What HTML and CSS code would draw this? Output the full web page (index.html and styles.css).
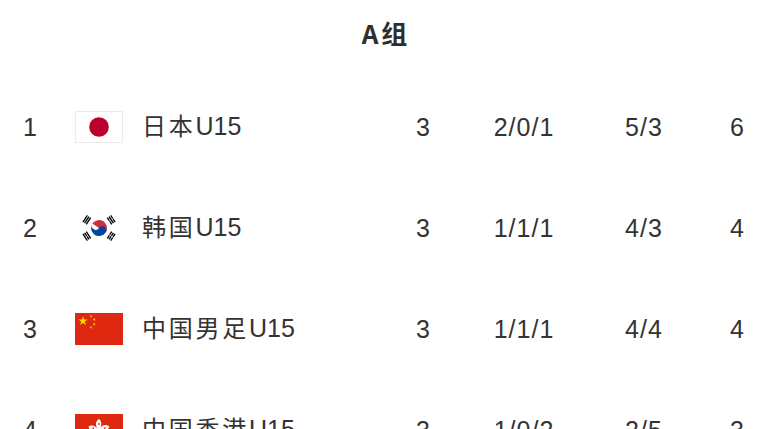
FILE: index.html
```html
<!DOCTYPE html>
<html lang="zh-CN">
<head>
<meta charset="utf-8">
<title>A组</title>
<link rel="stylesheet" href="styles.css">
</head>
<body>
<div class="page">
  <div class="title">A组</div>
  <div class="table">
    <div class="row">
      <div class="rank">1</div>
      <div class="flag-cell">
        <svg class="flag flag-jp" viewBox="0 0 48 32" width="48" height="32">
          <rect x="0.5" y="0.5" width="47" height="31" fill="#fff" stroke="#ebebeb"/>
          <circle cx="24" cy="16" r="9.8" fill="#bc002d"/>
        </svg>
      </div>
      <div class="name"><span class="cn">日本</span>U15</div>
      <div class="stat">3</div>
      <div class="stat">2/0/1</div>
      <div class="stat">5/3</div>
      <div class="stat">6</div>
    </div>
    <div class="row">
      <div class="rank">2</div>
      <div class="flag-cell">
        <svg class="flag" viewBox="-36 -24 72 48" width="48" height="32">
          <rect x="-36" y="-24" width="72" height="48" fill="#fff"/>
          <g transform="rotate(-56.3099325)">
            <g id="kr-b2">
              <path id="kr-b" d="M-6-26H6v2H-6zm0 3H6v2H-6zm0 3H6v2H-6z" fill="#000"/>
              <use href="#kr-b" y="44"/>
            </g>
            <path stroke="#fff" d="M0,17v10"/>
            <path fill="#cd2e3a" d="M0-12A12 12 0 0 1 0 12z"/>
            <path fill="#0047a0" d="M0-12A12 12 0 0 0 0 12 6 6 0 0 0 0 0 6 6 0 0 1 0-12z"/>
          </g>
          <g transform="rotate(-123.6900675)">
            <use href="#kr-b2"/>
            <path stroke="#fff" d="M0-23.5v3M0,17v3.5M0,23.5v3"/>
          </g>
        </svg>
      </div>
      <div class="name"><span class="cn">韩国</span>U15</div>
      <div class="stat">3</div>
      <div class="stat">1/1/1</div>
      <div class="stat">4/3</div>
      <div class="stat">4</div>
    </div>
    <div class="row">
      <div class="rank">3</div>
      <div class="flag-cell">
        <svg class="flag" viewBox="0 0 30 20" width="48" height="32">
          <rect width="30" height="20" fill="#de2910"/>
          <g fill="#ffde00">
            <path d="M5,2 L6.763,7.427 L2.147,4.073 L7.853,4.073 L3.237,7.427Z"/>
            <path d="M0,-1 L0.588,0.809 L-0.951,-0.309 L0.951,-0.309 L-0.588,0.809Z" transform="translate(10,2) rotate(23.04)"/>
            <path d="M0,-1 L0.588,0.809 L-0.951,-0.309 L0.951,-0.309 L-0.588,0.809Z" transform="translate(12,4) rotate(45.87)"/>
            <path d="M0,-1 L0.588,0.809 L-0.951,-0.309 L0.951,-0.309 L-0.588,0.809Z" transform="translate(12,7) rotate(69.95)"/>
            <path d="M0,-1 L0.588,0.809 L-0.951,-0.309 L0.951,-0.309 L-0.588,0.809Z" transform="translate(10,9) rotate(20.66)"/>
          </g>
        </svg>
      </div>
      <div class="name"><span class="cn">中国男足</span>U15</div>
      <div class="stat">3</div>
      <div class="stat">1/1/1</div>
      <div class="stat">4/4</div>
      <div class="stat">4</div>
    </div>
    <div class="row">
      <div class="rank">4</div>
      <div class="flag-cell">
        <svg class="flag" viewBox="0 0 48 32" width="48" height="32">
          <rect width="48" height="32" fill="#de2910"/>
          <g transform="translate(24,16)" fill="#fff">
            <path d="M0,0 C-4,-3 -4,-9 0,-11 C3,-9 3,-4 0,0Z"/>
            <path d="M0,0 C-4,-3 -4,-9 0,-11 C3,-9 3,-4 0,0Z" transform="rotate(72)"/>
            <path d="M0,0 C-4,-3 -4,-9 0,-11 C3,-9 3,-4 0,0Z" transform="rotate(144)"/>
            <path d="M0,0 C-4,-3 -4,-9 0,-11 C3,-9 3,-4 0,0Z" transform="rotate(216)"/>
            <path d="M0,0 C-4,-3 -4,-9 0,-11 C3,-9 3,-4 0,0Z" transform="rotate(288)"/>
          </g>
          <g transform="translate(24,16)" fill="#de2910">
            <circle cx="0" cy="-6" r="0.9"/>
            <circle cx="5.7" cy="-1.9" r="0.9"/>
            <circle cx="3.5" cy="4.9" r="0.9"/>
            <circle cx="-3.5" cy="4.9" r="0.9"/>
            <circle cx="-5.7" cy="-1.9" r="0.9"/>
          </g>
        </svg>
      </div>
      <div class="name"><span class="cn">中国香港</span>U15</div>
      <div class="stat">3</div>
      <div class="stat">1/0/2</div>
      <div class="stat">2/5</div>
      <div class="stat">3</div>
    </div>
  </div>
</div>
</body>
</html>
```

FILE: styles.css
```css
html, body {
  margin: 0;
  padding: 0;
  background: #ffffff;
}

body {
  font-family: "Liberation Sans", "Noto Sans CJK SC", sans-serif;
  color: #333333;
  overflow: hidden;
}

.page {
  width: 783px;
  height: 429px;
  overflow: hidden;
}

.title {
  font-family: "Noto Sans CJK SC", "Liberation Sans", sans-serif;
  font-weight: 700;
  font-size: 26px;
  height: 66px;
  line-height: 66px;
  margin-bottom: 10px;
  text-align: center;
  letter-spacing: 3px;
  padding-right: 11px;
  color: #2e2e2e;
}

.table {
  display: flex;
  flex-direction: column;
}

.row {
  display: grid;
  grid-template-columns: 60px 82px 251px 61px 140px 100px 87px;
  align-items: center;
  height: 101px;
  font-size: 25px;
  line-height: 30px;
}

.rank {
  text-align: center;
}

.flag-cell {
  display: flex;
  align-items: center;
  padding-left: 15px;
}

.flag {
  display: block;
}

.name {
  font-size: 25px;
  line-height: 30px;
  white-space: nowrap;
}

.cn {
  font-size: 24px;
  letter-spacing: 2.75px;
}

.stat {
  text-align: center;
  letter-spacing: 1px;
}
```
